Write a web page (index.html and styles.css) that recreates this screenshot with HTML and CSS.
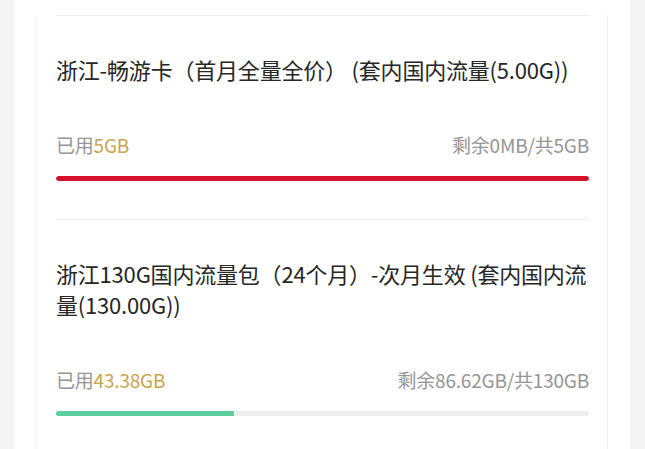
FILE: index.html
```html
<!DOCTYPE html>
<html lang="zh-CN">
<head>
    <meta charset="UTF-8">
    <meta name="viewport" content="width=device-width, initial-scale=1.0">
    <title>流量使用</title>
    <link rel="stylesheet" href="styles.css">
</head>
<body>
    <div class="page">
        <div class="card">
            <div class="item">
                <div class="item-title">浙江-畅游卡（首月全量全价） (套内国内流量(5.00G))</div>
                <div class="usage">
                    <span class="used">已用<em>5GB</em></span>
                    <span class="remain">剩余0MB/共5GB</span>
                </div>
                <div class="bar"><div class="bar-fill full" style="width: 100%"></div></div>
            </div>

            <div class="item">
                <div class="item-title">浙江130G国内流量包（24个月）-次月生效 (套内国内流量(130.00G))</div>
                <div class="usage">
                    <span class="used">已用<em>43.38GB</em></span>
                    <span class="remain">剩余86.62GB/共130GB</span>
                </div>
                <div class="bar"><div class="bar-fill" style="width: 33.37%"></div></div>
            </div>
        </div>
    </div>
</body>
</html>
```

FILE: styles.css
```css
* {
    margin: 0;
    padding: 0;
    box-sizing: border-box;
    font-family: "Noto Sans CJK SC", "Noto Sans", sans-serif;
}

body {
    background-color: #f4f4f4;
    height: 449px;
    overflow: hidden;
}

.page {
    background-color: white;
    margin: 0 15px 0 14px;
    padding: 15px 22px 0;
    min-height: 100vh;
}

.card {
    border-left: 1px solid #f0f0f0;
    border-right: 1px solid #f0f0f0;
    padding: 0 18px 0 19px;
    min-height: 434px;
}

.item {
    border-top: 1px solid #ececec;
    padding: 38px 0 38px;
}

.item-title {
    font-size: 22px;
    line-height: 31px;
    letter-spacing: -0.2px;
    color: #262626;
}

.usage {
    display: flex;
    justify-content: space-between;
    margin-top: 47px;
    font-size: 19px;
    line-height: 26px;
    letter-spacing: -0.2px;
    color: #959595;
}

.usage em {
    font-style: normal;
    color: #c9a44c;
}

.bar {
    margin-top: 18px;
    height: 5px;
    border-radius: 3px;
    background-color: #eeeeee;
    overflow: hidden;
}

.bar-fill {
    height: 100%;
    background-color: #5ccd9f;
}

.bar-fill.full {
    background-color: #d6112b;
    border-radius: 3px;
}
```
